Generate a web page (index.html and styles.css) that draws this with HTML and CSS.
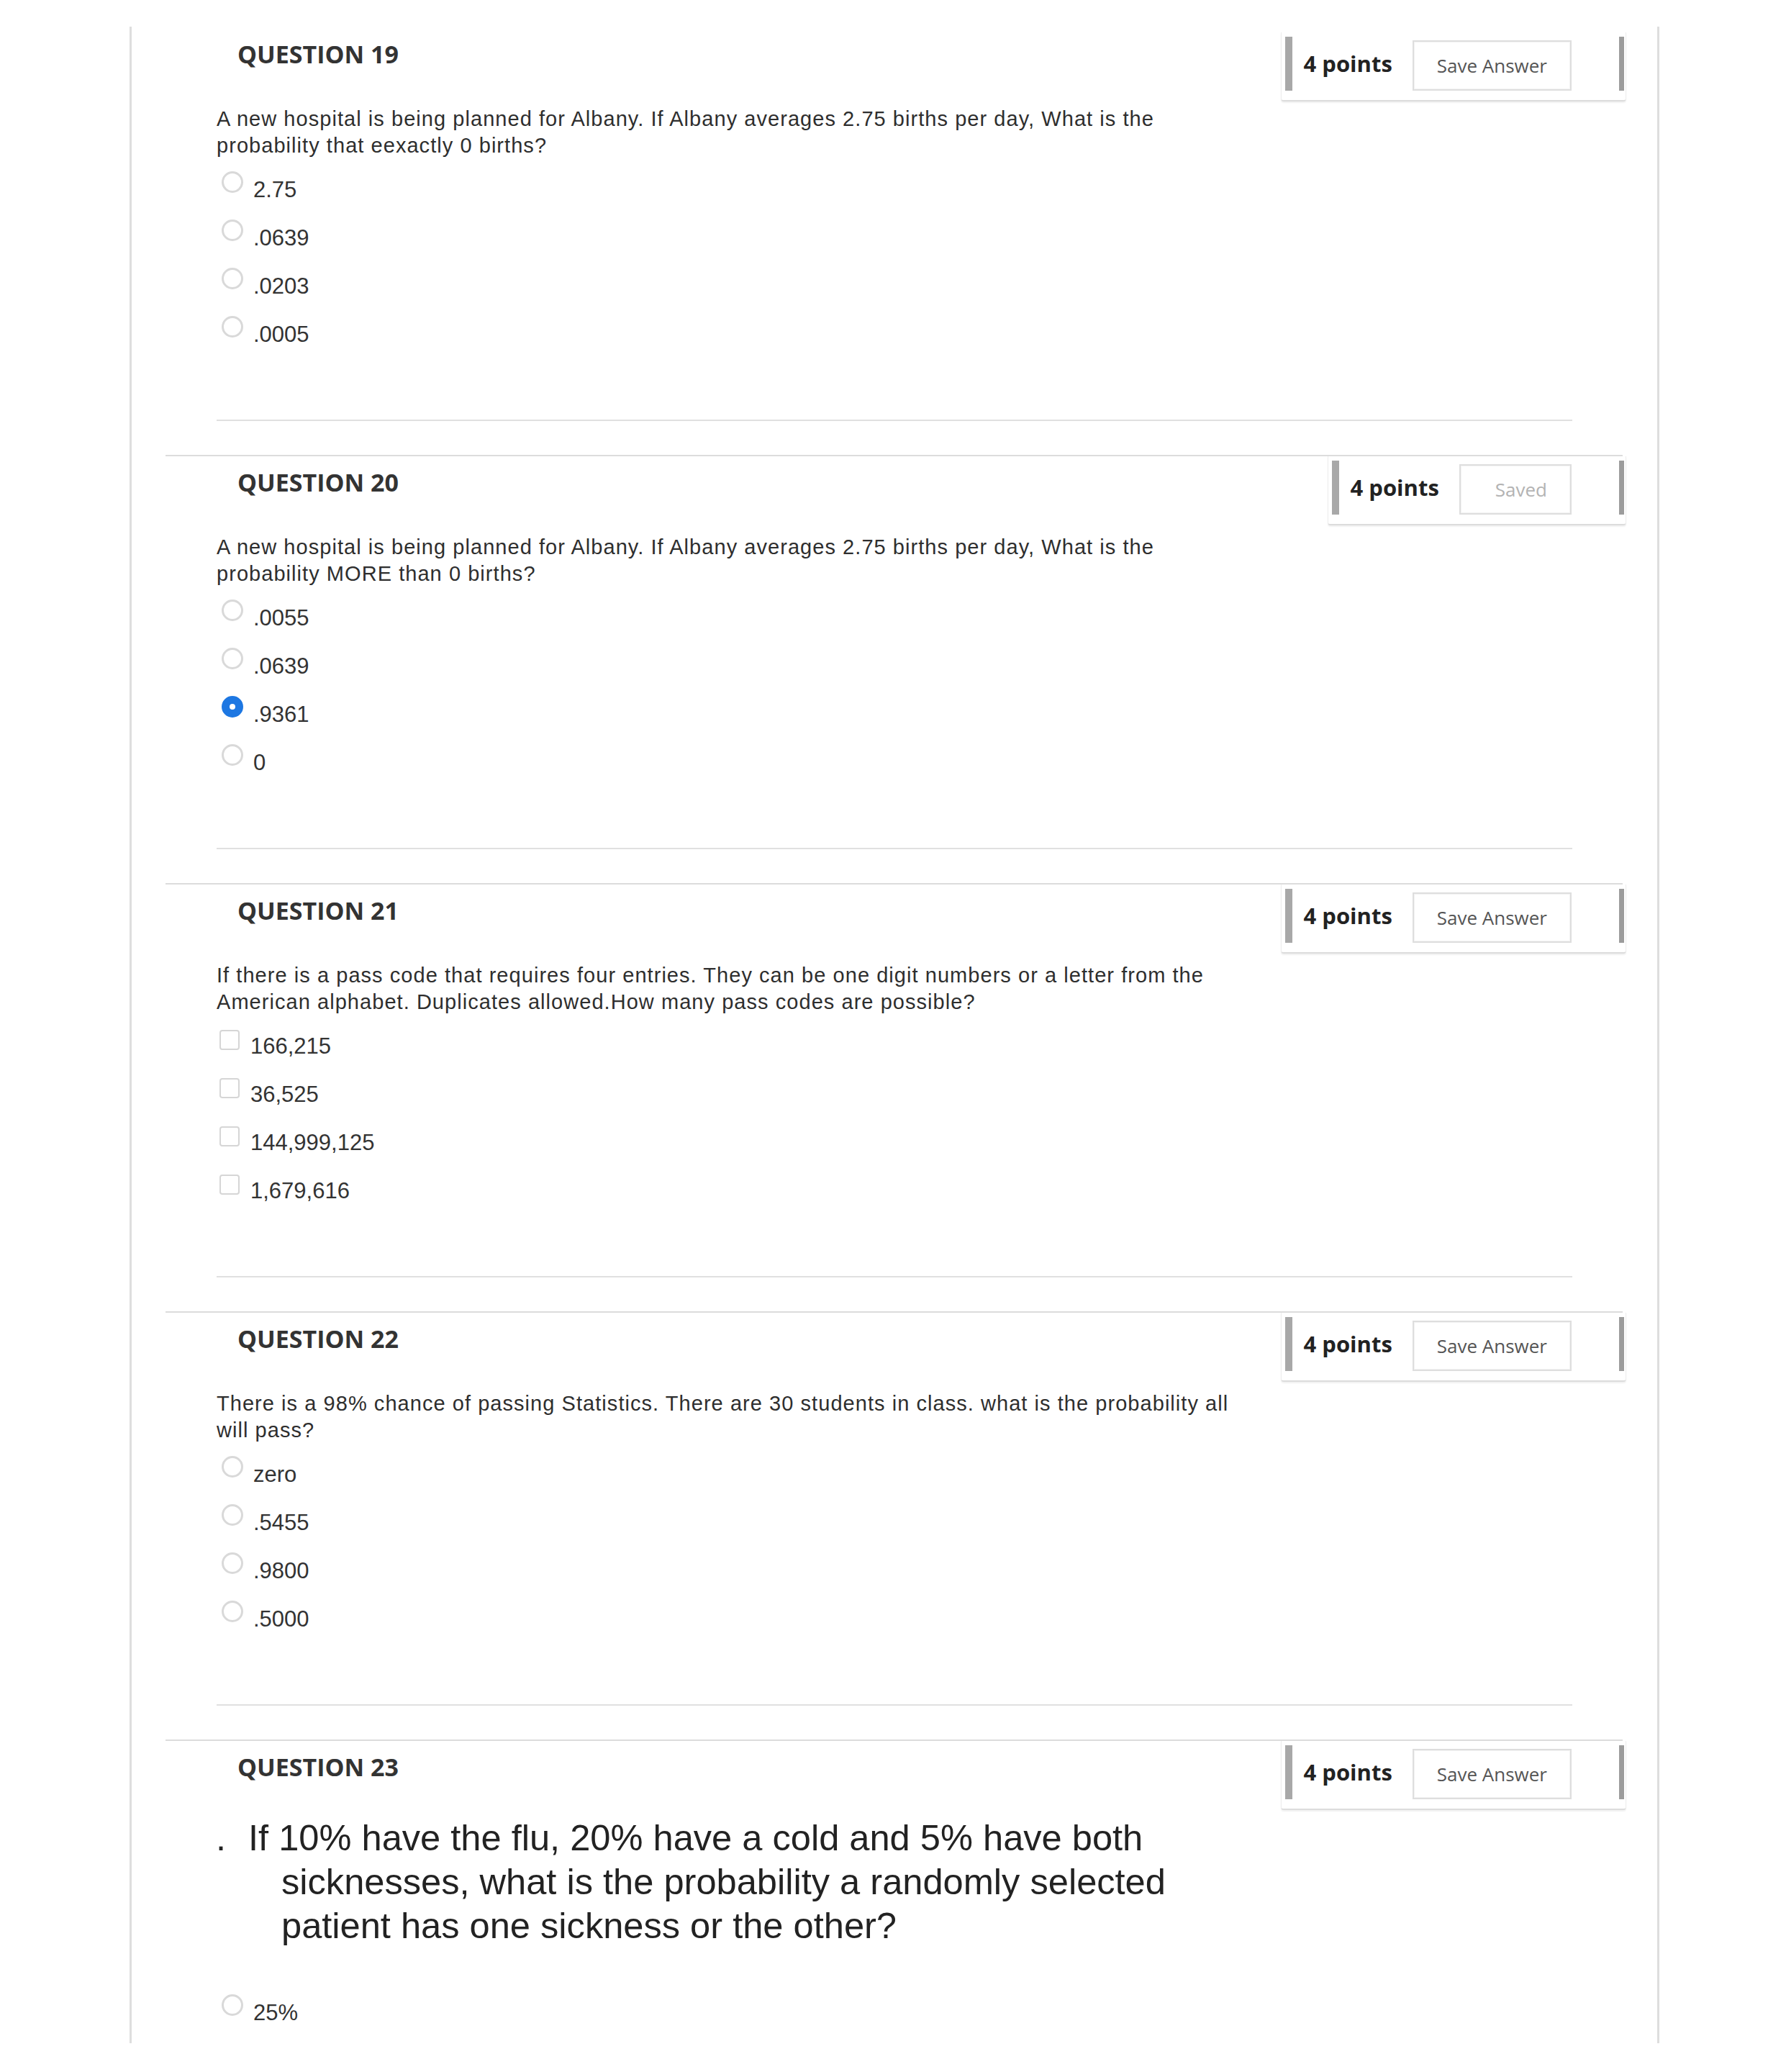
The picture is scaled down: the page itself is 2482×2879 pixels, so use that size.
FILE: index.html
```html
<!DOCTYPE html>
<html lang="en">
<head>
<meta charset="utf-8">
<title>Questions</title>
<link rel="stylesheet" href="styles.css">
</head>
<body>
<div class="page">

  <section class="q q-first">
    <div class="q-head">
      <h2 class="q-title">QUESTION 19</h2>
      <div class="pts"><span class="pts-bar"></span><span class="pts-label">4 points</span><button class="save">Save Answer</button><span class="pts-bar pts-bar-r"></span></div>
    </div>
    <p class="q-text">A new hospital is being planned for Albany. If Albany averages 2.75 births per day, What is the<br>probability that eexactly 0 births?</p>
    <ul class="opts">
      <li class="opt"><span class="radio"></span><span class="opt-label">2.75</span></li>
      <li class="opt"><span class="radio"></span><span class="opt-label">.0639</span></li>
      <li class="opt"><span class="radio"></span><span class="opt-label">.0203</span></li>
      <li class="opt"><span class="radio"></span><span class="opt-label">.0005</span></li>
    </ul>
    <div class="q-sep"></div>
  </section>

  <section class="q">
    <div class="q-head">
      <h2 class="q-title">QUESTION 20</h2>
      <div class="pts"><span class="pts-bar"></span><span class="pts-label">4 points</span><button class="save save-done">Saved</button><span class="pts-bar pts-bar-r"></span></div>
    </div>
    <p class="q-text">A new hospital is being planned for Albany. If Albany averages 2.75 births per day, What is the<br>probability MORE than 0 births?</p>
    <ul class="opts">
      <li class="opt"><span class="radio"></span><span class="opt-label">.0055</span></li>
      <li class="opt"><span class="radio"></span><span class="opt-label">.0639</span></li>
      <li class="opt"><span class="radio radio-on"></span><span class="opt-label">.9361</span></li>
      <li class="opt"><span class="radio"></span><span class="opt-label">0</span></li>
    </ul>
    <div class="q-sep"></div>
  </section>

  <section class="q">
    <div class="q-head">
      <h2 class="q-title">QUESTION 21</h2>
      <div class="pts"><span class="pts-bar"></span><span class="pts-label">4 points</span><button class="save">Save Answer</button><span class="pts-bar pts-bar-r"></span></div>
    </div>
    <p class="q-text">If there is a pass code that requires four entries. They can be one digit numbers or a letter from the<br>American alphabet. Duplicates allowed.How many pass codes are possible?</p>
    <ul class="opts">
      <li class="opt"><span class="check"></span><span class="opt-label">166,215</span></li>
      <li class="opt"><span class="check"></span><span class="opt-label">36,525</span></li>
      <li class="opt"><span class="check"></span><span class="opt-label">144,999,125</span></li>
      <li class="opt"><span class="check"></span><span class="opt-label">1,679,616</span></li>
    </ul>
    <div class="q-sep"></div>
  </section>

  <section class="q">
    <div class="q-head">
      <h2 class="q-title">QUESTION 22</h2>
      <div class="pts"><span class="pts-bar"></span><span class="pts-label">4 points</span><button class="save">Save Answer</button><span class="pts-bar pts-bar-r"></span></div>
    </div>
    <p class="q-text">There is a 98% chance of passing Statistics. There are 30 students in class. what is the probability all<br>will pass?</p>
    <ul class="opts">
      <li class="opt"><span class="radio"></span><span class="opt-label">zero</span></li>
      <li class="opt"><span class="radio"></span><span class="opt-label">.5455</span></li>
      <li class="opt"><span class="radio"></span><span class="opt-label">.9800</span></li>
      <li class="opt"><span class="radio"></span><span class="opt-label">.5000</span></li>
    </ul>
    <div class="q-sep"></div>
  </section>

  <section class="q q-last">
    <div class="q-head">
      <h2 class="q-title">QUESTION 23</h2>
      <div class="pts"><span class="pts-bar"></span><span class="pts-label">4 points</span><button class="save">Save Answer</button><span class="pts-bar pts-bar-r"></span></div>
    </div>
    <div class="lead">
      <span class="lead-dot">.</span>
      <p class="lead-text">If 10% have the flu, 20% have a cold and 5% have both<br>sicknesses, what is the probability a randomly selected<br>patient has one sickness or the other?</p>
    </div>
    <ul class="opts opts-far">
      <li class="opt"><span class="radio"></span><span class="opt-label">25%</span></li>
    </ul>
  </section>

</div>
</body>
</html>
```

FILE: styles.css
```css
* { box-sizing: border-box; }

html, body {
  margin: 0;
  padding: 0;
  background: #ffffff;
}

body {
  width: 2482px;
  height: 2879px;
  overflow: hidden;
}

.page {
  margin: 48px 0 0 180px;
  width: 2126px;
  height: 2802px;
  border-left: 3px solid #dedede;
  border-right: 3px solid #dedede;
}

.q {
  margin-left: 47px;
  width: 2025px;
  height: 595px;
  border-top: 2px solid #dcdcdc;
  display: flex;
  flex-direction: column;
}

.q-first {
  margin-top: -11px;
  border-top-color: transparent;
}

.q-first .pts { margin-top: 6px; }

.q-last { height: auto; }

.q-head {
  display: flex;
  justify-content: space-between;
  align-items: flex-start;
  height: 96px;
}

.q-title {
  margin: 16px 0 0 100px;
  font: 700 34px/40px "Open Sans", "Liberation Sans", sans-serif;
  color: #333333;
}

.pts {
  display: flex;
  align-items: flex-start;
  height: 96px;
  margin-right: -5px;
  padding: 6px 2px 0 5px;
  border: 1px solid #ededed;
  border-top: none;
  border-bottom: 2px solid #dcdcdc;
  border-radius: 0 0 4px 4px;
  box-shadow: 0 2px 2px rgba(0, 0, 0, 0.06);
  background: #fff;
}

.pts-bar {
  width: 10px;
  height: 75px;
  background: #a8a8a8;
  flex: none;
}

.pts-bar-r {
  width: 7px;
  background: #9c9c9c;
  margin-left: 66px;
}

.pts-label {
  margin-left: 16px;
  font: 700 31px/75px "Open Sans", "Liberation Sans", sans-serif;
  color: #222222;
  white-space: nowrap;
}

.save {
  margin: 5px 0 0 28px;
  height: 70px;
  padding: 0 32px;
  border: 2px solid #dedede;
  box-shadow: inset 0 0 0 1px #f3f3f3;
  background: #ffffff;
  font: 400 26px "Open Sans", "Liberation Sans", sans-serif;
  color: #555555;
  white-space: nowrap;
}

.save-done {
  padding: 0 32px 0 48px;
  color: #b3b3b3;
}

.q-text {
  margin: 12px 0 0 71px;
  font: 29px/37px "Liberation Sans", Arial, sans-serif;
  letter-spacing: 1.05px;
  color: #2e2e2e;
  white-space: nowrap;
}

.opts {
  list-style: none;
  margin: 17px 0 0 78px;
  padding: 0;
}

.opts-far { margin-top: 65px; }

.opt {
  display: flex;
  align-items: flex-start;
  height: 67px;
}

.radio {
  flex: none;
  width: 30px;
  height: 30px;
  border-radius: 50%;
  border: 3px solid #d9d9d9;
  background: #ffffff;
}

.radio-on {
  border: 11px solid #1d77e2;
}

.check {
  flex: none;
  width: 28px;
  height: 28px;
  margin: 3px 0 0 -3px;
  border: 2px solid #d6d6d6;
  border-radius: 4px;
  background: #ffffff;
}

.check + .opt-label { margin-left: 15px; }

.opt-label {
  margin: 8px 0 0 14px;
  font: 31px/36px "Liberation Sans", Arial, sans-serif;
  color: #333333;
  white-space: nowrap;
}

.q-sep {
  margin: auto 0 47px 71px;
  width: 1884px;
  height: 2px;
  background: #e0e0e0;
}

.lead {
  display: flex;
  align-items: flex-start;
  margin: 8px 0 0 70px;
  font: 50.6px/61px "Liberation Sans", Arial, sans-serif;
  color: #222222;
}

.lead-dot {
  width: 45px;
  flex: none;
}

.lead-text {
  margin: 0;
  padding-left: 46px;
  text-indent: -46px;
  white-space: nowrap;
}
```
